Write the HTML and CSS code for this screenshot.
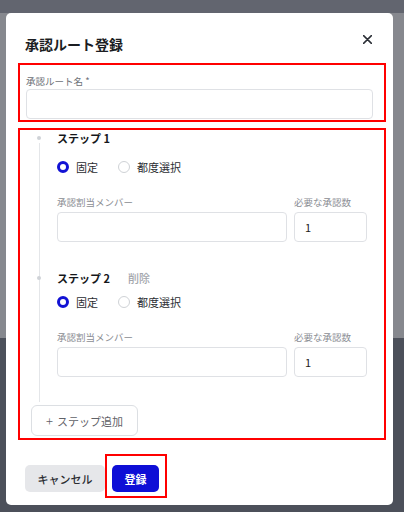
FILE: index.html
```html
<!DOCTYPE html>
<html lang="ja">
<head>
<meta charset="utf-8">
<link rel="stylesheet" href="styles.css">
</head>
<body>
<div class="modal">
  <div class="header">
    <h1 class="title">承認ルート登録</h1>
    <svg class="close" width="9" height="9" viewBox="0 0 9 9"><path d="M0.6 0.6 L8.4 8.4 M8.4 0.6 L0.6 8.4" stroke="#2b2f36" stroke-width="1.5" stroke-linecap="round"/></svg>
  </div>

  <section class="box name-box">
    <div class="label">承認ルート名 *</div>
    <input class="input" type="text">
  </section>

  <section class="box steps-box">
    <div class="steps">
      <div class="step">
        <div class="step-title"><span>ステップ 1</span></div>
        <div class="radios first">
          <span class="radio on"></span><span class="rlabel">固定</span>
          <span class="radio"></span><span class="rlabel">都度選択</span>
        </div>
        <div class="fields">
          <div class="field wide">
            <div class="label">承認割当メンバー</div>
            <input class="input" type="text">
          </div>
          <div class="field narrow">
            <div class="label">必要な承認数</div>
            <input class="input num" type="text" value="1">
          </div>
        </div>
      </div>
      <div class="step second">
        <div class="step-title"><span>ステップ 2</span><span class="delete">削除</span></div>
        <div class="radios">
          <span class="radio on"></span><span class="rlabel">固定</span>
          <span class="radio"></span><span class="rlabel">都度選択</span>
        </div>
        <div class="fields">
          <div class="field wide">
            <div class="label">承認割当メンバー</div>
            <input class="input" type="text">
          </div>
          <div class="field narrow">
            <div class="label">必要な承認数</div>
            <input class="input num" type="text" value="1">
          </div>
        </div>
      </div>
    </div>
    <button class="add-btn"><span class="plus">+</span>ステップ追加</button>
  </section>

  <div class="footer">
    <button class="cancel">キャンセル</button>
    <div class="submit-box"><button class="submit">登録</button></div>
  </div>
</div>
</body>
</html>
```
FILE: styles.css
```css
* { box-sizing: border-box; }
html, body { height: 100%; }
body {
  margin: 0;
  padding: 13px 0 0 6px;
  font-family: "Noto Sans CJK JP", "Noto Sans", sans-serif;
  background: linear-gradient(to bottom, #62656f 0, #62656f 13px, #86888e 13px, #86888e 338px, #4c505a 338px);
  overflow: hidden;
}
.modal {
  width: 387px;
  height: 492px;
  background: #fff;
  border-radius: 5px;
  padding: 18px 0 7px 0;
}
.header {
  display: flex;
  justify-content: space-between;
  align-items: flex-start;
  padding: 0 21px 0 19px;
}
.title {
  margin: 0;
  font-size: 14px;
  line-height: 26px;
  font-weight: 700;
  color: #1b1d22;
}
.close { margin-top: 4px; display: block; }
.box {
  border: 2px solid #ff0000;
  margin: 6px 7px 0 12px;
}
.name-box {
  padding: 9px 11px 1px 6px;
}
.label {
  font-size: 9.5px;
  line-height: 14px;
  color: #8a8d93;
  white-space: nowrap;
}
.name-box .label { margin-bottom: 1px; color: #6d7077; }
.input {
  display: block;
  width: 100%;
  height: 30px;
  border: 1px solid #dfe1e5;
  border-radius: 4px;
  background: #fff;
  font-family: inherit;
  font-size: 11px;
  color: #222;
  padding: 0 9px;
  outline: none;
}
.steps-box {
  padding: 0 16px 2px 0;
}
.steps {
  position: relative;
  margin-left: 19px;
  padding: 0 0 25px 18px;
}
.steps::before {
  content: "";
  position: absolute;
  left: 0;
  top: 13px;
  bottom: 0;
  border-left: 1px solid #e4e6e9;
}
.step-title {
  position: relative;
  display: flex;
  gap: 18px;
  font-size: 11px;
  line-height: 16px;
  font-weight: 700;
  color: #15171b;
}
.step-title::before {
  content: "";
  position: absolute;
  left: -20px;
  top: 6px;
  width: 4px;
  height: 4px;
  border-radius: 50%;
  background: #cfd2d7;
}
.delete { color: #a3a6ac; font-weight: 500; }
.step.second { margin-top: 28px; }
.radios {
  display: flex;
  align-items: center;
  height: 20px;
  margin-top: 6px;
  font-size: 11px;
  color: #2b2d32;
}
.radios.first { margin-top: 11px; }
.radio {
  width: 12px;
  height: 12px;
  border-radius: 50%;
  border: 1px solid #cfd2d6;
  background: #fff;
}
.radio.on { border: 3.5px solid #1212d4; }
.rlabel { margin-left: 7px; margin-right: 20px; }
.fields {
  display: flex;
  gap: 7px;
  margin-top: 18px;
}
.fields .label { margin-bottom: 3px; }
.field.wide { width: 230px; }
.field.narrow { width: 73px; }
.input.num { padding-left: 10px; }
.add-btn {
  display: block;
  margin: 3px 0 0 11px;
  width: 107px;
  height: 31px;
  border: 1px solid #dcdfe3;
  border-radius: 6px;
  background: #fff;
  font-family: inherit;
  font-size: 11px;
  color: #5f6268;
  padding: 0;
}
.plus { font-weight: 300; font-size: 13px; margin-right: 4px; }
.footer {
  display: flex;
  align-items: flex-start;
  margin-top: 14px;
  padding-left: 19px;
}
.cancel {
  margin-top: 11px;
  width: 80px;
  height: 27px;
  border: none;
  border-radius: 5px;
  background: #e6e7ea;
  font-family: inherit;
  font-size: 11px;
  font-weight: 500;
  color: #2a2c31;
  padding: 0;
}
.submit-box {
  border: 2px solid #ff0000;
  padding: 9px 6px 4px 5px;
}
.submit {
  display: block;
  width: 47px;
  height: 27px;
  border: none;
  border-radius: 5px;
  background: #0e0ed6;
  font-family: inherit;
  font-size: 11px;
  font-weight: 700;
  color: #fff;
  padding: 0;
}
```
